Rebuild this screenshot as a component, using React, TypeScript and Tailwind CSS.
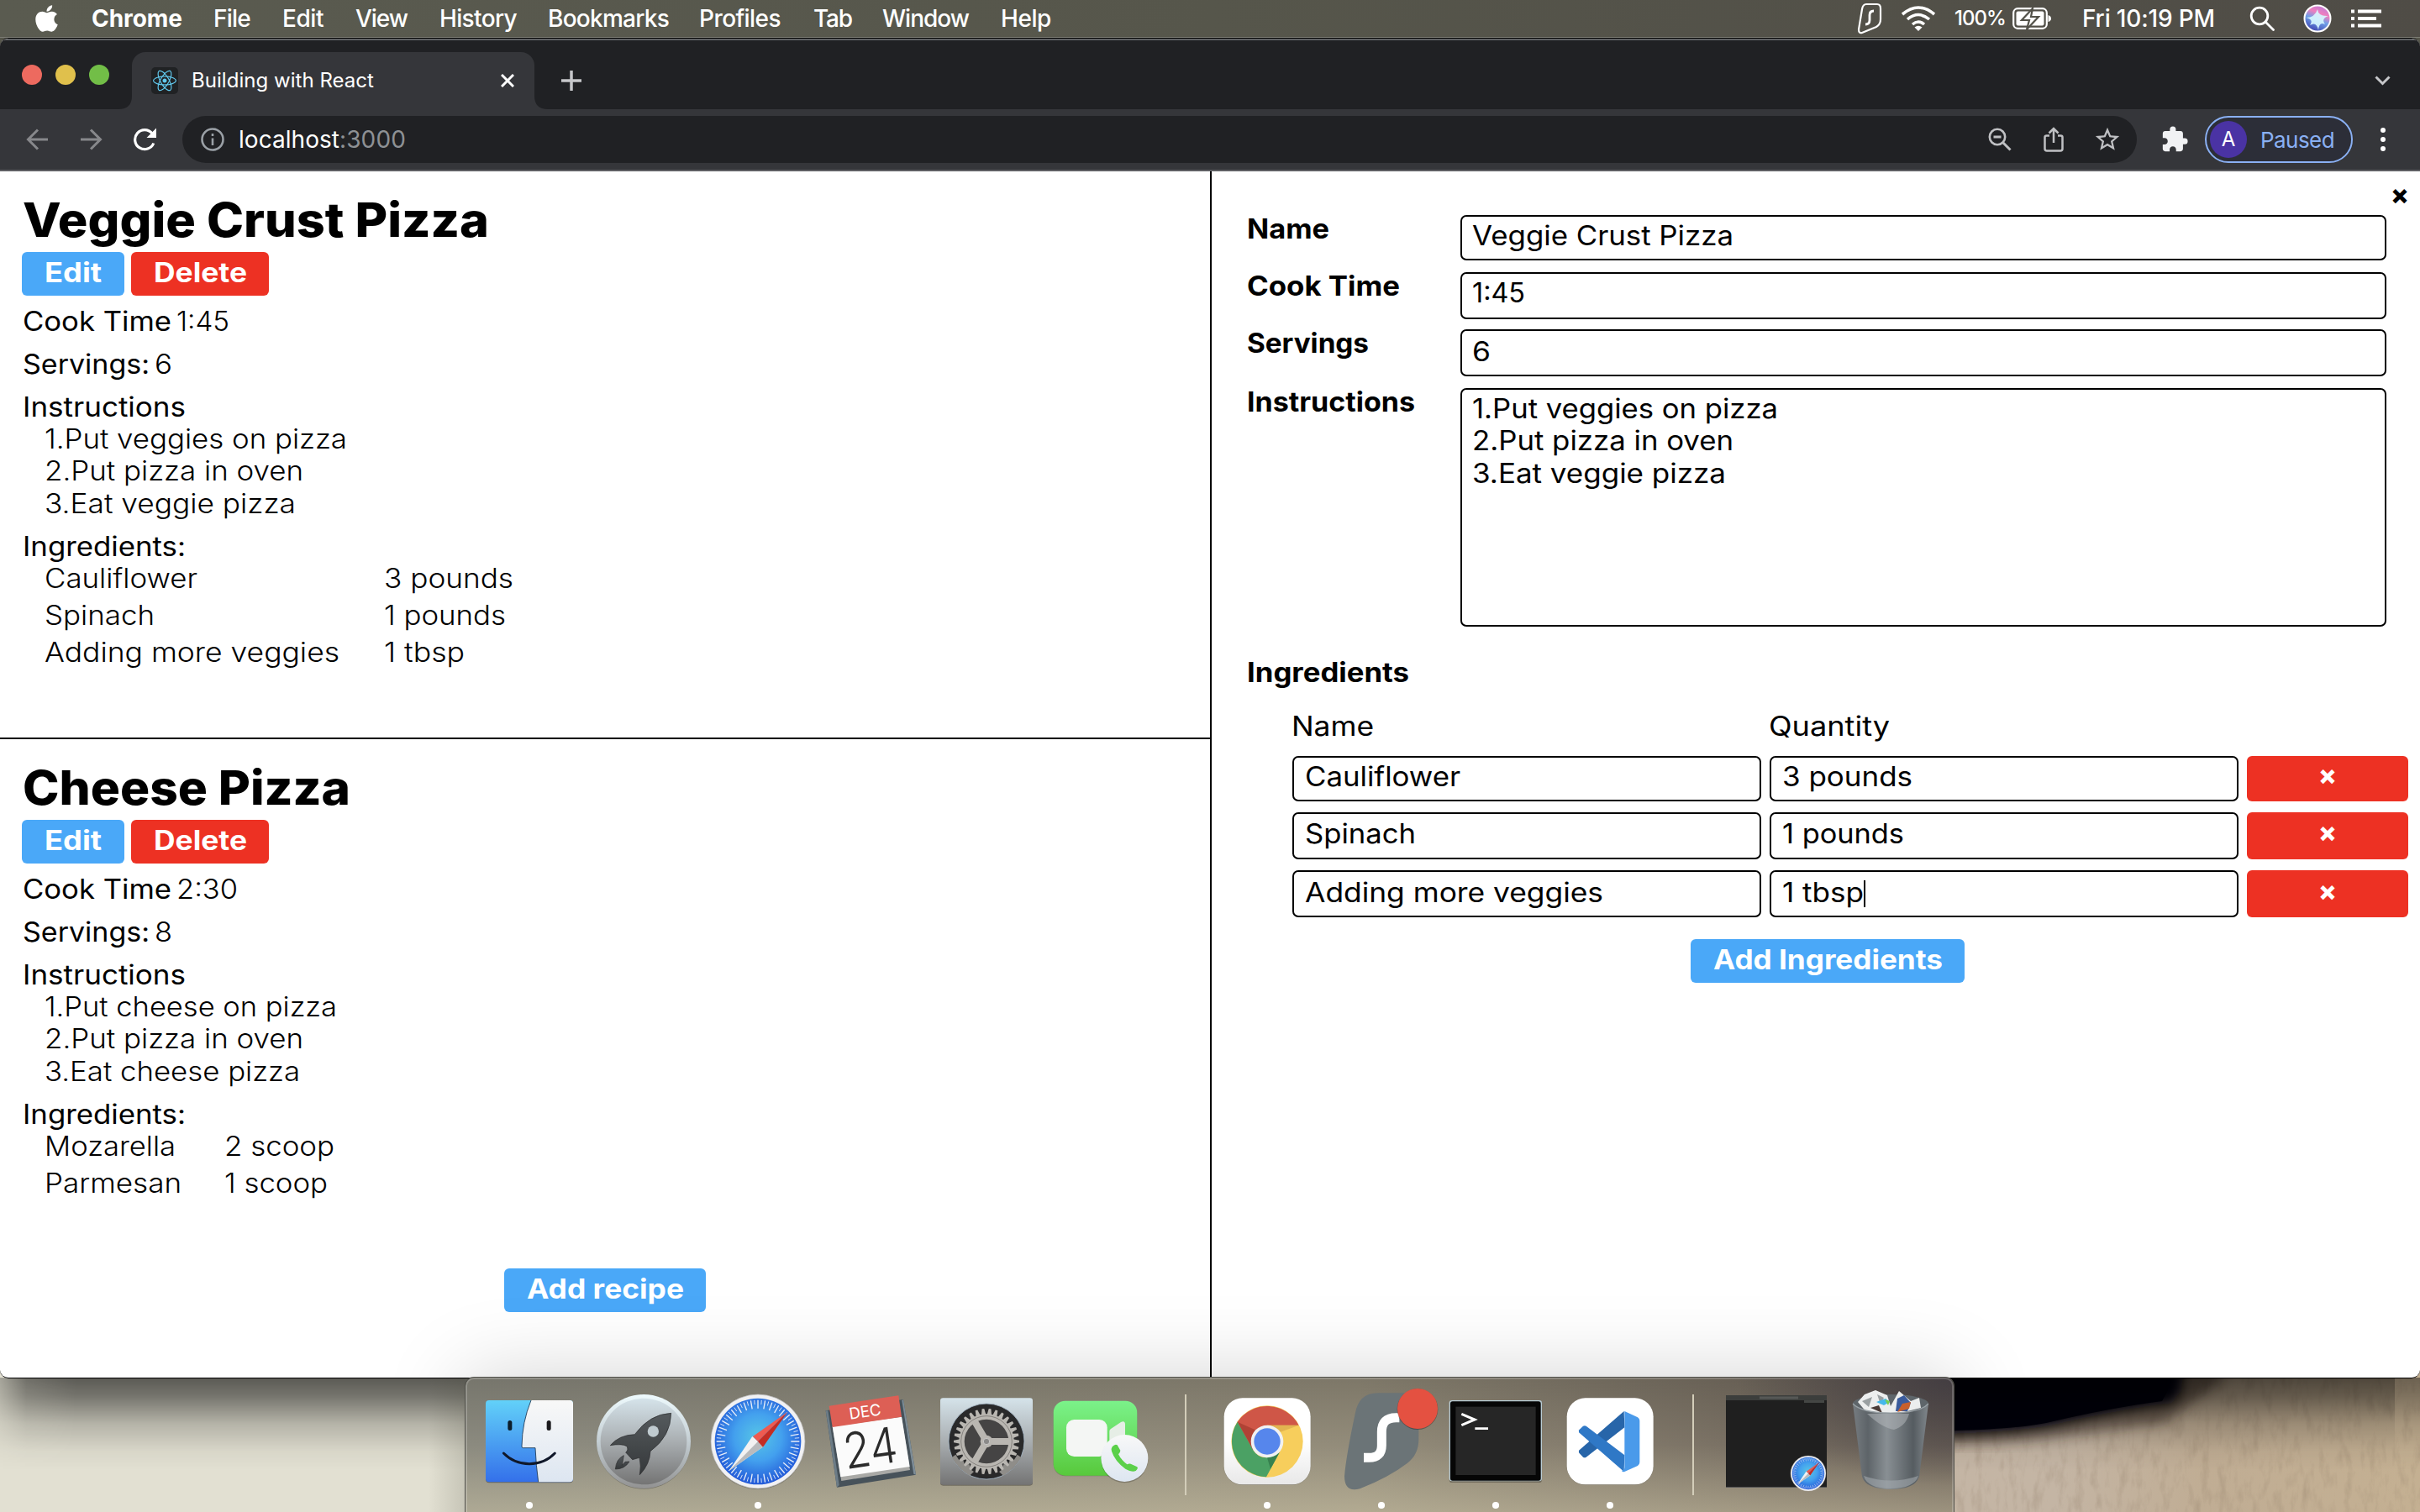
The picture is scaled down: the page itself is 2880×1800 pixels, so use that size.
import { useLayoutEffect, useRef } from "react";
import type { ReactNode } from "react";
import { FaApple, FaReact } from "react-icons/fa";
import { MdExtension, MdStarBorder } from "react-icons/md";

/* Single-line text that spreads its letters to fill a given advance width. */
function Fit({ w, className = "", children }: { w: number; className?: string; children: string }) {
  const ref = useRef<HTMLSpanElement>(null);
  useLayoutEffect(() => {
    const el = ref.current;
    if (!el) return;
    el.style.letterSpacing = "0px";
    el.style.width = "auto";
    const natural = el.getBoundingClientRect().width;
    el.style.letterSpacing = `${(w - natural) / children.length}px`;
    el.style.width = `${w}px`;
  }, [w, children]);
  return (
    <span ref={ref} className={`inline-block whitespace-nowrap ${className}`}>
      {children}
    </span>
  );
}

/* Page text in a wide cut: glyphs are stretched to the given advance width. */
function Wide({ w, className = "", children }: { w: number; className?: string; children: string }) {
  const ref = useRef<HTMLSpanElement>(null);
  useLayoutEffect(() => {
    const el = ref.current;
    if (!el) return;
    el.style.transform = "none";
    el.style.width = "max-content";
    const natural = el.getBoundingClientRect().width;
    el.style.width = `${w}px`;
    el.style.transform = `scaleX(${w / natural})`;
  }, [w, children]);
  return (
    <span ref={ref} className={`block origin-left translate-y-[1.2px] text-left whitespace-nowrap ${className}`}>
      {children}
    </span>
  );
}

/* ---------- menu bar ---------- */

const menus = [
  { label: "Chrome", w: 108, cell: "w-[145px]" },
  { label: "File", w: 44, cell: "w-[82px]" },
  { label: "Edit", w: 49, cell: "w-[87px]" },
  { label: "View", w: 62, cell: "w-[100px]" },
  { label: "History", w: 92, cell: "w-[129px]" },
  { label: "Bookmarks", w: 144, cell: "w-[180px]" },
  { label: "Profiles", w: 97, cell: "w-[136px]" },
  { label: "Tab", w: 46, cell: "w-[82px]" },
  { label: "Window", w: 103, cell: "w-[141px]" },
  { label: "Help", w: 60, cell: "w-[80px]" },
];

function MenuBar() {
  return (
    <header className="flex h-[44px] shrink-0 items-center bg-linear-to-r from-[#5a5b50] via-[#56564b] to-[#4f4c46] text-[28px] leading-[44px] text-white">
      <div className="flex w-[109px] justify-start pl-[40px]">
        <FaApple className="h-[36px] w-[31px]" />
      </div>
      {menus.map((m, i) => (
        <div key={m.label} className={m.cell}>
          <Fit w={m.w} className={i === 0 ? "font-bold" : "font-medium"}>
            {m.label}
          </Fit>
        </div>
      ))}
      <div className="ml-auto flex items-center pr-[46px]">
        <svg className="mr-[22px] h-[38px] w-[30px]" viewBox="0 0 30 38" fill="none" stroke="white" strokeWidth="2.2">
          <path d="M11 2H24Q28 2 28 7V20Q28 26 23 29L6 36Q2 37 2 32L6 8Q7 2 11 2Z" />
          <path d="M20 10Q15 10 15 15V21Q15 26 10 26" strokeWidth="2.8" />
        </svg>
        <svg className="mr-[22px] h-[30px] w-[42px]" viewBox="0 0 42 30" fill="none" stroke="white" strokeWidth="3.6">
          <path d="M2 10Q21 -6 40 10" />
          <path d="M8 16Q21 5 34 16" />
          <path d="M14 22Q21 16 28 22" />
          <path d="M21 30L16.5 25.5Q21 22 25.500 25.5Z" fill="white" stroke="none" />
        </svg>
        <Fit w={61} className="mr-[8px] text-[24px] font-medium">
          100%
        </Fit>
        <svg className="mr-[37px] h-[26px] w-[46px]" viewBox="0 0 46 26">
          <rect x="1.200" y="1.200" width="39.600" height="23.600" rx="5" fill="none" stroke="white" strokeWidth="2.2" />
          <rect x="4.500" y="4.500" width="33" height="17" rx="2" fill="white" />
          <path d="M42.500 9Q46 10 46 13T42.500 17Z" fill="white" />
          <path d="M24 1L11 15H20L17 26L31 11H22Z" fill="white" stroke="#53524a" strokeWidth="2.2" />
        </svg>
        <Fit w={158} className="mr-[41px] font-medium">
          Fri 10:19 PM
        </Fit>
        <svg className="mr-[34px] h-[30px] w-[30px]" viewBox="0 0 30 30" fill="none" stroke="white" strokeWidth="2.8">
          <circle cx="12" cy="12" r="9.800" />
          <path d="M19 19L28.500 28.5" strokeLinecap="round" />
        </svg>
        <svg className="mr-[23px] h-[34px] w-[34px]" viewBox="0 0 34 34">
          <defs>
            <linearGradient id="siri" x1="0.700" y1="0" x2="0.300" y2="1">
              <stop offset="0" stopColor="#c078d8" />
              <stop offset="0.300" stopColor="#ef7fbe" />
              <stop offset="0.550" stopColor="#6f9fe8" />
              <stop offset="1" stopColor="#3b3fae" />
            </linearGradient>
          </defs>
          <circle cx="17" cy="17" r="15.500" fill="url(#siri)" stroke="white" strokeWidth="2" />
          <path d="M3 16Q14 16 17 6Q18 15 30 14Q21 17 26 24Q19 20 18 31Q16 20 8 25Q13 18 3 16Z" fill="#d8f8ff" opacity="0.900" />
        </svg>
        <svg className="h-[22px] w-[36px]" viewBox="0 0 36 22" fill="white">
          <path d="M0 0.500h4v4h-4zM0 9h4v4h-4zM0 17.500h4v4h-4zM8 0.500h28v4h-28zM8 9h22v4h-22zM8 17.500h28v4h-28z" />
        </svg>
      </div>
    </header>
  );
}

/* ---------- browser chrome ---------- */

function TabStrip() {
  return (
    <div className="flex h-[82px] shrink-0 items-end bg-[#202124]">
      <div className="flex h-[82px] w-[141px] items-center gap-[16px] pl-[26px]">
        <span className="h-[24px] w-[24px] rounded-full bg-[#ed6a5f]" />
        <span className="h-[24px] w-[24px] rounded-full bg-[#e0c04c]" />
        <span className="h-[24px] w-[24px] rounded-full bg-[#72be47]" />
      </div>
      <svg className="h-[16px] w-[16px]" viewBox="0 0 16 16">
        <path d="M16 0V16H0Q16 16 16 0Z" fill="#35363a" />
      </svg>
      <div className="flex h-[68px] w-[479px] items-center rounded-t-[16px] bg-[#35363a] pr-[24px] pl-[23px]">
        <span className="flex h-[32px] w-[32px] items-center justify-center rounded-[5px] bg-[#202224]">
          <FaReact className="h-[28px] w-[28px] text-[#61c9ee]" />
        </span>
        <Fit w={217} className="ml-[16px] text-[24px] leading-[68px] text-white">
          Building with React
        </Fit>
        <svg className="ml-auto h-[16px] w-[16px]" viewBox="0 0 16 16" stroke="white" strokeWidth="3">
          <path d="M1 1L15 15M15 1L1 15" />
        </svg>
      </div>
      <svg className="h-[16px] w-[16px]" viewBox="0 0 16 16">
        <path d="M0 0V16H16Q0 16 0 0Z" fill="#35363a" />
      </svg>
      <div className="flex h-[68px] flex-1 items-center justify-between pr-[35px] pl-[15px]">
        <svg className="h-[26px] w-[26px]" viewBox="0 0 26 26" stroke="#c6c7ca" strokeWidth="3.500">
          <path d="M13 1V25M1 13H25" />
        </svg>
        <svg className="h-[12px] w-[19px]" viewBox="0 0 19 12" fill="none" stroke="#c6c7ca" strokeWidth="3">
          <path d="M1.500 1.500L9.500 9.500L17.500 1.500" />
        </svg>
      </div>
    </div>
  );
}

function Toolbar() {
  return (
    <div className="flex h-[74px] shrink-0 items-center border-b-[2px] border-[#5e5f63] bg-[#35363a]">
      <div className="flex w-[217px] items-center pl-[31px]">
        <svg className="h-[26px] w-[27px]" viewBox="0 0 27 26" fill="none" stroke="#87888b" strokeWidth="3">
          <path d="M26 13H3M14 1.500L2.500 13L14 24.5" />
        </svg>
        <svg className="ml-[37px] h-[26px] w-[27px]" viewBox="0 0 27 26" fill="none" stroke="#87888b" strokeWidth="3">
          <path d="M1 13H24M13 1.500L24.500 13L13 24.5" />
        </svg>
        <svg className="ml-[36px] h-[28px] w-[29px]" viewBox="0 0 29 28" fill="none" stroke="white" strokeWidth="3.2">
          <path d="M24.800 18.500A11.500 11.500 0 1 1 23 6.8" />
          <path d="M28 0.500V12H16.500Z" fill="white" stroke="none" />
        </svg>
      </div>
      <div className="flex h-[56px] w-[2326px] items-center rounded-full bg-[#202124] pr-[18px] pl-[22px]">
        <svg className="h-[28px] w-[28px]" viewBox="0 0 28 28" fill="none" stroke="#9aa0a6" strokeWidth="2.6">
          <circle cx="14" cy="14" r="12.500" />
          <path d="M14 12.500V21M14 7V10" />
        </svg>
        <Fit w={120} className="ml-[17px] text-[28px] leading-[56px] text-white">
          localhost
        </Fit>
        <Fit w={79} className="text-[28px] leading-[56px] text-[#8e9195]">
          :3000
        </Fit>
        <div className="ml-auto flex items-center text-[#bfc0c3]">
          <svg className="mr-[38px] h-[28px] w-[28px]" viewBox="0 0 28 28" fill="none" stroke="currentColor" strokeWidth="2.6">
            <circle cx="11" cy="11" r="9.200" />
            <path d="M18 18L26.500 26.500M6.500 11H15.500" strokeWidth="3" />
          </svg>
          <svg className="mr-[35px] h-[30px] w-[24px]" viewBox="0 0 24 30" fill="none" stroke="currentColor" strokeWidth="2.5">
            <path d="M7 10.500H3.500Q1.500 10.500 1.500 12.500V26Q1.500 28.500 4 28.500H20Q22.500 28.500 22.500 26V12.500Q22.500 10.500 20.500 10.500H17M12 19V2.500M6.500 7.500L12 2L17.500 7.500" />
          </svg>
          <MdStarBorder className="h-[34px] w-[34px]" />
        </div>
      </div>
      <MdExtension className="ml-[28px] h-[34px] w-[34px] text-[#f1f2f4]" />
      <div className="ml-[19px] flex h-[56px] w-[176px] items-center rounded-full border-[2px] border-[#8ab0f3] bg-[#2c2e38] pl-[4px]">
        <span className="flex h-[44px] w-[44px] items-center justify-center rounded-full bg-[#4a33a4] text-[24px] text-white">A</span>
        <Fit w={88} className="ml-[16px] text-[26px] text-[#8ab0f3]">
          Paused
        </Fit>
      </div>
      <div className="ml-[33px] flex flex-col gap-[5px]">
        <span className="h-[6px] w-[6px] rounded-full bg-white" />
        <span className="h-[6px] w-[6px] rounded-full bg-white" />
        <span className="h-[6px] w-[6px] rounded-full bg-white" />
      </div>
    </div>
  );
}

/* ---------- recipe list ---------- */

type Line = { text: string; w: number };
type Recipe = {
  title: Line;
  cook: Line;
  servings: string;
  steps: Line[];
  nameCol: string;
  ingredients: { name: Line; qty: Line }[];
};

const recipes: Recipe[] = [
  {
    title: { text: "Veggie Crust Pizza", w: 555 },
    cook: { text: "1:45", w: 63 },
    servings: "6",
    steps: [
      { text: "1.Put veggies on pizza", w: 360 },
      { text: "2.Put pizza in oven", w: 308 },
      { text: "3.Eat veggie pizza", w: 299 },
    ],
    nameCol: "w-[404px]",
    ingredients: [
      { name: { text: "Cauliflower", w: 182 }, qty: { text: "3 pounds", w: 154 } },
      { name: { text: "Spinach", w: 131 }, qty: { text: "1 pounds", w: 145 } },
      { name: { text: "Adding more veggies", w: 351 }, qty: { text: "1 tbsp", w: 96 } },
    ],
  },
  {
    title: { text: "Cheese Pizza", w: 390 },
    cook: { text: "2:30", w: 73 },
    servings: "8",
    steps: [
      { text: "1.Put cheese on pizza", w: 348 },
      { text: "2.Put pizza in oven", w: 308 },
      { text: "3.Eat cheese pizza", w: 304 },
    ],
    nameCol: "w-[214px]",
    ingredients: [
      { name: { text: "Mozarella", w: 156 }, qty: { text: "2 scoop", w: 131 } },
      { name: { text: "Parmesan", w: 163 }, qty: { text: "1 scoop", w: 123 } },
    ],
  },
];

function Button({ label, w, className }: { label: string; w: number; className: string }) {
  return (
    <button className={`flex h-[52px] justify-center rounded-[6px] pt-[4px] leading-[40px] font-bold text-white ${className}`}>
      <Wide w={w}>{label}</Wide>
    </button>
  );
}

function RecipeCard({ recipe, className }: { recipe: Recipe; className: string }) {
  return (
    <article className={`pl-[27px] ${className}`}>
      <h2 className="h-[64px] text-[56px] leading-[62px] font-extrabold">
        <Wide w={recipe.title.w}>{recipe.title.text}</Wide>
      </h2>
      <div className="mt-[6px] -ml-px flex gap-[8px]">
        <Button label="Edit" w={68} className="w-[122px] bg-[#4aa8f8]" />
        <Button label="Delete" w={111} className="w-[164px] bg-[#ed3123]" />
      </div>
      <div className="mt-[11px] flex flex-col gap-[12.4px]">
        <div className="flex h-[38.4px] gap-[6px]">
          <Wide w={177}>Cook Time</Wide>
          <Wide w={recipe.cook.w} className="font-light">
            {recipe.cook.text}
          </Wide>
        </div>
        <div className="flex h-[38.4px] gap-[6px]">
          <Wide w={151}>Servings:</Wide>
          <Wide w={21} className="font-light">
            {recipe.servings}
          </Wide>
        </div>
        <div>
          <Wide w={194}>Instructions</Wide>
          <ol className="pl-[26px] font-light">
            {recipe.steps.map((s) => (
              <li key={s.text} className="h-[38.4px]">
                <Wide w={s.w}>{s.text}</Wide>
              </li>
            ))}
          </ol>
        </div>
        <div>
          <Wide w={194}>Ingredients:</Wide>
          <div className="flex flex-col gap-[5.6px] pl-[26px] font-light">
            {recipe.ingredients.map((g) => (
              <div key={g.name.text} className="flex h-[38.4px]">
                <div className={recipe.nameCol}>
                  <Wide w={g.name.w}>{g.name.text}</Wide>
                </div>
                <Wide w={g.qty.w}>{g.qty.text}</Wide>
              </div>
            ))}
          </div>
        </div>
      </div>
    </article>
  );
}

/* ---------- edit form ---------- */

function Field({ label, w, className, children }: { label: string; w: number; className: string; children: ReactNode }) {
  return (
    <div className="flex items-start">
      <div className="-mt-[3px] w-[254px] font-bold">
        <Wide w={w}>{label}</Wide>
      </div>
      <div className={`w-[1102px] rounded-[7px] border-[2px] border-black pl-[12px] ${className}`}>{children}</div>
    </div>
  );
}

const formRows = [
  { name: { text: "Cauliflower", w: 185 }, qty: { text: "3 pounds", w: 155 }, box: "h-[54px] pt-[3px]" },
  { name: { text: "Spinach", w: 132 }, qty: { text: "1 pounds", w: 145 }, box: "h-[56px] pt-[4px]" },
  { name: { text: "Adding more veggies", w: 355 }, qty: { text: "1 tbsp", w: 97 }, box: "h-[56px] pt-[5px]" },
];

function EditForm() {
  return (
    <section className="flex w-[1440px] flex-col border-l-[2px] border-black">
      <div className="flex h-[52px] justify-end pt-[9px] pr-[11px]">
        <span className="w-[26px] text-center leading-[38px] font-extrabold">×</span>
      </div>
      <div className="flex flex-col pl-[42px]">
        <Field label="Name" w={98} className="mb-[14px] h-[54px] pt-[3px]">
          <Wide w={311}>Veggie Crust Pizza</Wide>
        </Field>
        <Field label="Cook Time" w={182} className="mb-[12px] h-[56px] pt-[3px]">
          <Wide w={63}>1:45</Wide>
        </Field>
        <Field label="Servings" w={145} className="mb-[14px] h-[56px] pt-[5px]">
          <Wide w={22}>6</Wide>
        </Field>
        <Field label="Instructions" w={200} className="h-[284px] pt-[3px]">
          <Wide w={364}>1.Put veggies on pizza</Wide>
          <Wide w={311}>2.Put pizza in oven</Wide>
          <Wide w={302}>3.Eat veggie pizza</Wide>
        </Field>
        <div className="mt-[35px] h-[38px] font-bold">
          <Wide w={193}>Ingredients</Wide>
        </div>
      </div>
      <div className="mt-[26px] flex h-[38px] pl-[95px]">
        <div className="w-[568px]">
          <Wide w={98}>Name</Wide>
        </div>
        <Wide w={144}>Quantity</Wide>
      </div>
      <div className="mt-[17px] flex flex-col gap-[13px] pl-[96px]">
        {formRows.map((r, i) => (
          <div key={r.name.text} className="flex gap-[10px]">
            <div className={`w-[558px] rounded-[7px] border-[2px] border-black pl-[13px] ${r.box}`}>
              <Wide w={r.name.w}>{r.name.text}</Wide>
            </div>
            <div className={`flex w-[558px] rounded-[7px] border-[2px] border-black pl-[13px] ${r.box}`}>
              <Wide w={r.qty.w}>{r.qty.text}</Wide>
              {i === 2 && <span className="mt-[5px] h-[32px] w-[2px] bg-black" />}
            </div>
            <button className={`flex w-[192px] justify-center rounded-[6px] bg-[#ed3123] leading-[40px] font-extrabold text-white ${r.box}`}>×</button>
          </div>
        ))}
      </div>
      <div className="mt-[26px] flex pl-[570px]">
        <Button label="Add Ingredients" w={273} className="w-[326px] bg-[#4aa8f8]" />
      </div>
    </section>
  );
}

/* ---------- desktop and dock ---------- */

function Wallpaper() {
  return (
    <svg className="absolute bottom-0 left-0 h-[170px] w-[2880px]" viewBox="0 1630 2880 170">
      <defs>
        <linearGradient id="wallShade" x1="0" y1="0" x2="0" y2="1">
          <stop offset="0" stopColor="#000" stopOpacity="0.600" />
          <stop offset="0.200" stopColor="#000" stopOpacity="0.480" />
          <stop offset="0.500" stopColor="#000" stopOpacity="0.200" />
          <stop offset="0.800" stopColor="#000" stopOpacity="0.040" />
          <stop offset="1" stopColor="#000" stopOpacity="0" />
        </linearGradient>
        <linearGradient id="edgeL" x1="0" y1="0" x2="1" y2="0">
          <stop offset="0" stopColor="#fff" stopOpacity="0.450" />
          <stop offset="0.350" stopColor="#fff" stopOpacity="0.850" />
          <stop offset="1" stopColor="#fff" stopOpacity="1" />
        </linearGradient>
        <mask id="shadeMask">
          <rect y="1630" width="90" height="170" fill="url(#edgeL)" />
          <rect x="90" y="1630" width="2760" height="170" fill="#fff" />
          <rect x="2850" y="1630" width="30" height="170" fill="#bbb" />
        </mask>
        <linearGradient id="edgeDock" x1="0" y1="0" x2="1" y2="0">
          <stop offset="0" stopColor="#4a4a3c" stopOpacity="0" />
          <stop offset="1" stopColor="#4a4a3c" stopOpacity="0.180" />
        </linearGradient>
        <linearGradient id="carpet" x1="0" y1="0" x2="1" y2="0">
          <stop offset="0" stopColor="#c4b6a6" />
          <stop offset="0.700" stopColor="#c4b5a4" />
          <stop offset="0.820" stopColor="#c0ad94" />
          <stop offset="1" stopColor="#c4b092" />
        </linearGradient>
        <filter id="grain" x="0" y="0" width="1" height="1">
          <feTurbulence type="fractalNoise" baseFrequency="0.1 0.035" numOctaves="4" seed="4" />
          <feColorMatrix values="0 0 0 0 0.25  0 0 0 0 0.18  0 0 0 0 0.12  1.5 0 0 0 -0.7" />
        </filter>
        <filter id="soft">
          <feGaussianBlur stdDeviation="7" />
        </filter>
      </defs>
      <rect y="1630" width="1440" height="170" fill="#e2e0d2" />
      <rect x="1440" y="1630" width="1440" height="170" fill="url(#carpet)" />
      <rect x="1440" y="1630" width="1440" height="170" filter="url(#grain)" opacity="0.400" />
      <path d="M2300 1620H2620L2650 1640Q2600 1675 2575 1695Q2500 1702 2440 1712Q2380 1720 2300 1720Z" fill="#2a1c18" opacity="0.500" filter="url(#soft)" />
      <path d="M2280 1610H2600L2596 1655L2585 1670Q2520 1678 2440 1697Q2390 1706 2280 1708Z" fill="#01010c" filter="url(#soft)" />
      <path d="M2280 1610H2575L2580 1655L2573 1668Q2510 1676 2435 1694Q2390 1703 2280 1704Z" fill="#01010c" />
      <rect y="1640" width="2880" height="110" fill="url(#wallShade)" mask="url(#shadeMask)" />
      <rect x="510" y="1640" width="44" height="160" fill="url(#edgeDock)" />
    </svg>
  );
}

function Glyph({ box, dot, children }: { box: string; dot?: boolean; children: ReactNode }) {
  const [x, y, w, h] = box.split(" ").map(Number);
  return (
    <svg className="h-[160px] w-[136px] overflow-visible" viewBox={box}>
      {children}
      {dot && <circle cx={x + w / 2} cy={y + h * 0.95} r={w * 0.03} fill="white" />}
    </svg>
  );
}

function Compass({ cx, cy, r }: { cx: number; cy: number; r: number }) {
  return (
    <g transform={`translate(${cx} ${cy}) scale(${r / 168})`}>
      <circle r="168" fill="#f1f1f3" />
      <circle r="168" fill="none" stroke="#b5b5b5" strokeWidth="2" />
      <circle r="154" fill="url(#compass)" />
      {Array.from({ length: 72 }, (_, i) => (
        <line key={i} y1={-148} y2={i % 2 ? -132 : -118} stroke="#e8eef8" strokeWidth={i % 2 ? 2.5 : 4} transform={`rotate(${i * 5})`} />
      ))}
      <path d="M-104 106L-20 -18L20 18Z" fill="#f2f2f2" />
      <path d="M-104 106L0 0L20 18Z" fill="#b9bbbd" />
      <path d="M106 -106L-18 -18L0 0Z" fill="#ee5a50" />
      <path d="M106 -106L18 20L0 0Z" fill="#c42d24" />
    </g>
  );
}

const gearPath = Array.from({ length: 30 }, (_, i) => {
  const point = (r: number, deg: number) => {
    const a = ((i * 12 + deg) * Math.PI) / 180;
    return `${(522 + r * Math.cos(a)).toFixed(1)} ${(258 + r * Math.sin(a)).toFixed(1)}`;
  };
  return `${point(98, -4.5)}L${point(117, -2)}L${point(117, 2)}L${point(98, 4.5)}`;
}).join("L");

function Divider({ className = "" }: { className?: string }) {
  return (
    <div className={`flex h-[160px] w-[62px] justify-center pt-[20px] ${className}`}>
      <span className="h-[120px] w-[2px] bg-[#d3cdb9]" />
    </div>
  );
}

function Dock() {
  return (
    <div className="absolute top-[1639px] left-[553px] h-[161px] w-[1773px] overflow-hidden rounded-t-[11px] border-x border-t border-[#50504a] bg-linear-to-r from-[#8b8a7f] via-[#938c7a] via-60% to-[#6b6157]">
      <div className="absolute inset-0 bg-linear-to-b from-black/15 via-transparent to-[#d8cfae]/45" />
      <div className="absolute top-0 right-0 h-[130px] w-[260px] bg-[radial-gradient(ellipse_at_top_right,#3d383fcc,transparent_70%)]" />
      <div className="absolute inset-0 rounded-t-[10px] border-x-[2px] border-t-[2px] border-white/20" />
      <div className="relative flex pl-[8px]">
        <svg className="absolute h-0 w-0">
          <defs>
            <linearGradient id="finderBlue" x1="0" y1="0" x2="0" y2="1">
              <stop offset="0" stopColor="#62d1f9" />
              <stop offset="1" stopColor="#3470ea" />
            </linearGradient>
            <linearGradient id="paper" x1="0" y1="0" x2="0" y2="1">
              <stop offset="0" stopColor="#f8f8f8" />
              <stop offset="1" stopColor="#dde6f1" />
            </linearGradient>
            <linearGradient id="steel" x1="0" y1="0" x2="0" y2="1">
              <stop offset="0" stopColor="#d5e3ea" />
              <stop offset="0.500" stopColor="#a9aeb1" />
              <stop offset="1" stopColor="#747474" />
            </linearGradient>
            <linearGradient id="rim" x1="0" y1="0" x2="0" y2="1">
              <stop offset="0" stopColor="#eefafd" />
              <stop offset="0.500" stopColor="#c4ced3" />
              <stop offset="1" stopColor="#929292" />
            </linearGradient>
            <linearGradient id="ink" x1="0" y1="0" x2="0" y2="1">
              <stop offset="0" stopColor="#555a5d" />
              <stop offset="1" stopColor="#35383a" />
            </linearGradient>
            <radialGradient id="compass" cx="0.500" cy="0.450" r="0.550">
              <stop offset="0" stopColor="#57c6e6" />
              <stop offset="0.500" stopColor="#43a0ee" />
              <stop offset="1" stopColor="#2259d8" />
            </radialGradient>
            <linearGradient id="green" x1="0" y1="0" x2="0" y2="1">
              <stop offset="0" stopColor="#7bf28a" />
              <stop offset="1" stopColor="#58c93c" />
            </linearGradient>
            <linearGradient id="tile" x1="0" y1="0" x2="0" y2="1">
              <stop offset="0.500" stopColor="#ffffff" />
              <stop offset="1" stopColor="#e8e8e8" />
            </linearGradient>
            <linearGradient id="can" x1="0" y1="0" x2="1" y2="0">
              <stop offset="0" stopColor="#777d82" />
              <stop offset="0.200" stopColor="#5d6469" />
              <stop offset="0.450" stopColor="#899095" />
              <stop offset="0.800" stopColor="#555c61" />
              <stop offset="1" stopColor="#82898e" />
            </linearGradient>
          </defs>
        </svg>

        <Glyph box="66 30 408 480" dot>
          <rect x="114" y="113" width="312" height="293" rx="12" fill="#00000055" />
          <rect x="114" y="111" width="312" height="292" rx="12" fill="url(#finderBlue)" />
          <path d="M276 111H414Q426 111 426 123V391Q426 403 414 403H302Q294 345 291 281H247Q242 281 243 274Q244 190 276 111Z" fill="url(#paper)" />
          <path d="M276 111Q244 190 243 274Q242 281 247 281H291Q294 345 302 403" fill="none" stroke="#1b3550" strokeWidth="2.5" />
          <rect x="193" y="183" width="15" height="36" rx="7.500" fill="#0c1d2b" />
          <rect x="332" y="183" width="15" height="36" rx="7.500" fill="#1b1b1e" />
          <path d="M178 300Q215 338 270 338T361 300" fill="none" stroke="#10182a" strokeWidth="9" strokeLinecap="round" />
        </Glyph>

        <Glyph box="474 30 408 480">
          <circle cx="678" cy="261" r="167" fill="#00000040" />
          <circle cx="678" cy="258" r="168" fill="url(#rim)" />
          <circle cx="678" cy="258" r="154" fill="url(#steel)" />
          <path d="M776 157Q700 160 646 233Q590 235 559 272Q600 265 618 275Q625 290 614 297L638 323L663 316Q670 345 664 377Q700 340 702 293Q775 240 776 157Z" fill="url(#ink)" stroke="#2a2c2e" strokeWidth="2" />
          <path d="M607 308Q580 320 577 357Q610 357 627 330L612 331L601 343Z" fill="url(#ink)" stroke="#2a2c2e" strokeWidth="2" />
          <circle cx="712" cy="222" r="20" fill="#c0cbd0" />
        </Glyph>

        <Glyph box="882 30 408 480" dot>
          <circle cx="1086" cy="262" r="167" fill="#00000040" />
          <Compass cx={1086} cy={258} r={168} />
        </Glyph>

        <Glyph box="-90 30 408 480">
          <path d="M-52 148L225 108L270 377L-12 422Z" fill="#47525a" />
          <path d="M-52 148L-44 148L-4 414L-12 422Z" fill="#6c7c87" />
          <path d="M225 108L220 112L262 374L270 377Z" fill="#7d8d98" />
          <path d="M-28 205L219 170L249 360L4 399Z" fill="#a9a9a6" />
          <path d="M-28 205L219 170L248 348L1 385Z" fill="#fbfbfb" />
          <path d="M-40 131L208 94L219 170L-28 207Z" fill="#dd5f55" />
          <g transform="rotate(-8.3 90 260)">
            <text x="104" y="172" textAnchor="middle" fontSize="56" fill="white" fontFamily="Inter">
              DEC
            </text>
            <text x="104" y="346" textAnchor="middle" fontSize="176" fontWeight="300" fill="#2b2b2b" fontFamily="Inter" textLength="192" lengthAdjust="spacingAndGlyphs">
              24
            </text>
          </g>
        </Glyph>

        <Glyph box="318 30 408 480">
          <rect x="357" y="105" width="330" height="311" rx="10" fill="#00000050" />
          <rect x="357" y="103" width="330" height="310" rx="10" fill="url(#steel)" />
          <circle cx="522" cy="258" r="135" fill="#29292a" stroke="#a9bccb" strokeWidth="2.500" />
          <path d="M398 315L412 305L424 325L436 318L446 345L460 338L468 360L477 366L462 380Q420 355 398 315ZM646 315L632 305L620 325L608 318L598 345L584 338L576 360L567 366L582 380Q624 355 646 315Z" fill="#8f8d89" />
          <path d={`M${gearPath}Z`} fill="#b9b6b1" />
          <circle cx="522" cy="258" r="91" fill="none" stroke="#85827e" strokeWidth="3" />
          <circle cx="522" cy="258" r="79" fill="#454444" />
          <path d="M522 258H603M522 258L481 188M522 258L481 328" stroke="#b9b6b1" strokeWidth="24" />
          <circle cx="522" cy="258" r="22" fill="#b9b6b1" />
          <circle cx="522" cy="258" r="11" fill="#8b8a89" stroke="#dddddd" strokeWidth="2" />
        </Glyph>

        <Glyph box="726 30 408 480">
          <rect x="761" y="115" width="299" height="267" rx="42" fill="#00000035" />
          <rect x="761" y="113" width="299" height="267" rx="42" fill="url(#green)" />
          <rect x="807" y="180" width="146" height="132" rx="28" fill="#f4f6f4" />
          <path d="M961 222Q961 216 966 213L1002 189Q1017 182 1017 198V270H961Z" fill="#e6eee6" />
          <circle cx="1015" cy="322" r="84" fill="#00000035" />
          <circle cx="1015" cy="318" r="84" fill="url(#paper)" />
          <path d="M971 277Q981 266 989 271L1000 290Q1000 297 993 304Q1003 324 1024 340Q1031 336 1037 338L1060 349Q1065 354 1055 363Q1040 369 1018 356Q980 328 969 293Q966 284 971 277Z" fill="#5bd04a" />
        </Glyph>

        <Divider className="pl-[3px]" />

        <Glyph box="0 30 408 480" dot>
          <rect x="50" y="105" width="309" height="309" rx="66" fill="#00000038" />
          <rect x="50" y="103" width="309" height="309" rx="66" fill="url(#tile)" />
          <circle cx="204" cy="258" r="128" fill="#f7ce5c" />
          <path d="M204 258L148 290L98 188A128 128 0 0 1 317 200H204Z" fill="#cf5647" />
          <path d="M98 188L153 287Q172 318 204 316L248 298L201 385A128 128 0 0 1 98 188Z" fill="#4ba164" />
          <path d="M317 200H204Q230 202 250 225Z" fill="#d9a94c" opacity="0.700" />
          <path d="M98 188L148 275Q146 240 165 218Z" fill="#a33a2e" opacity="0.700" />
          <path d="M248 298Q232 315 204 316L216 356Z" fill="#2f7446" opacity="0.700" />
          <circle cx="204" cy="258" r="58" fill="#f1f1f1" />
          <circle cx="204" cy="258" r="47" fill="#5686ec" />
        </Glyph>

        <Glyph box="408 30 408 480" dot>
          <path d="M600 85H690Q745 88 745 140V250Q745 305 705 335Q640 385 535 427Q480 442 480 382Q486 310 518 160Q530 85 600 85Z" fill="#6b7477" />
          <path d="M676 173H664Q613 173 613 224V272Q613 316 568 316H549" fill="none" stroke="white" strokeWidth="33" />
          <circle cx="741" cy="143" r="73" fill="#00000050" />
          <circle cx="741" cy="141" r="72" fill="#e45141" />
        </Glyph>

        <Glyph box="816 30 408 480" dot>
          <rect x="854" y="115" width="331" height="290" rx="10" fill="#00000045" />
          <rect x="854" y="111" width="331" height="289" rx="10" fill="#b9ccd4" />
          <rect x="858" y="115" width="323" height="283" rx="8" fill="#060606" />
          <rect x="877" y="134" width="286" height="244" fill="#262626" />
          <path d="M898 160L945 180L898 200" fill="none" stroke="white" strokeWidth="9" />
          <path d="M946 212H993" stroke="white" strokeWidth="8" />
        </Glyph>

        <Glyph box="1224 30 408 480" dot>
          <rect x="1274" y="105" width="309" height="309" rx="66" fill="#00000038" />
          <rect x="1274" y="103" width="309" height="309" rx="66" fill="#ffffff" />
          <path d="M1478 150L1317 290Q1316 296 1318 299L1332 314Q1338 317 1343 314L1480 208Z" fill="#2765a9" />
          <path d="M1478 366L1317 226Q1316 220 1318 217L1332 203Q1338 200 1343 203L1480 307Z" fill="#2f78c6" />
          <path d="M1480 150L1527 172Q1534 176 1534 184V332Q1534 340 1527 345L1480 366Q1472 368 1470 362Q1480 362 1480 350Z" fill="#4a9aea" />
        </Glyph>

        <Divider />

        <Glyph box="2046 1640 136 160">
          <rect x="2054" y="1661" width="120" height="110" fill="#1f1f1f" />
          <rect x="2054" y="1661" width="120" height="6" fill="#3c3e3c" />
          <rect x="2094" y="1662.500" width="46" height="3" fill="#565856" />
          <rect x="2147" y="1667" width="24" height="3" fill="#444644" />
          <rect x="2054" y="1770" width="120" height="1" fill="#555" />
          <Compass cx={2152} cy={1754} r={21} />
        </Glyph>

        <Glyph box="2182 1640 136 160">
          <ellipse cx="2250" cy="1671" rx="45" ry="11" fill="#5e656a" />
          <path d="M2211 1669L2219 1660L2232 1655L2246 1661L2250 1674L2260 1656L2274 1668L2284 1664L2286 1676L2262 1682H2222Z" fill="#eceeee" />
          <path d="M2216 1668L2228 1663L2224 1675ZM2234 1660L2242 1664L2238 1672Z" fill="#9aa0a2" />
          <path d="M2233 1669L2244 1665L2249 1669L2242 1673Z" fill="#45b8ea" />
          <path d="M2243 1666L2249 1668L2247 1673Z" fill="#77cf4d" />
          <path d="M2258 1665L2266 1661L2274 1670L2270 1680H2256Z" fill="#3a5b9c" />
          <path d="M2264 1671L2274 1669L2272 1677L2258 1681Z" fill="#c8602c" />
          <path d="M2226 1676L2236 1673L2240 1682Z" fill="#4a3c38" />
          <path d="M2205 1671Q2215 1682 2250 1682T2295 1671L2284 1758Q2279 1773 2250 1773T2216 1758Z" fill="url(#can)" opacity="0.970" />
          <path d="M2205 1671Q2215 1682 2250 1682T2295 1671" fill="none" stroke="#9aa2a7" strokeWidth="1.200" />
          <path d="M2222 1683Q2240 1700 2254 1702Q2268 1698 2272 1683Z" fill="#b7bcbf" opacity="0.500" />
          <path d="M2218 1757Q2250 1768 2283 1757Q2278 1772 2250 1772T2218 1757Z" fill="#a2a9ad" opacity="0.600" />
        </Glyph>
      </div>
    </div>
  );
}

export default function App() {
  return (
    <div className="relative flex h-[1800px] w-[2880px] flex-col overflow-hidden bg-[#56564b] font-['Inter',sans-serif]">
      <Wallpaper />
      <MenuBar />
      <div className="h-px shrink-0 bg-[#7b7b73]" />
      <div className="relative flex h-[1596px] shrink-0 flex-col overflow-hidden rounded-[10px] border-y border-black bg-white">
        <div className="h-[2px] shrink-0 bg-[#606265]" />
        <TabStrip />
        <Toolbar />
        <main className="flex flex-1 text-[32px] leading-[38.4px] text-black">
          <section className="flex w-[1440px] flex-col">
            <RecipeCard recipe={recipes[0]} className="h-[676px] border-b-[2px] border-black pt-[26px]" />
            <RecipeCard recipe={recipes[1]} className="h-[630px] pt-[26px]" />
            <div className="flex justify-center">
              <Button label="Add recipe" w={187} className="w-[240px] bg-[#4aa8f8]" />
            </div>
          </section>
          <EditForm />
        </main>
        <div className="absolute -bottom-[161px] left-[554px] h-[161px] w-[1772px] shadow-[0_0_100px_rgb(0_0_0/0.180)]" />
      </div>
      <Dock />
    </div>
  );
}
